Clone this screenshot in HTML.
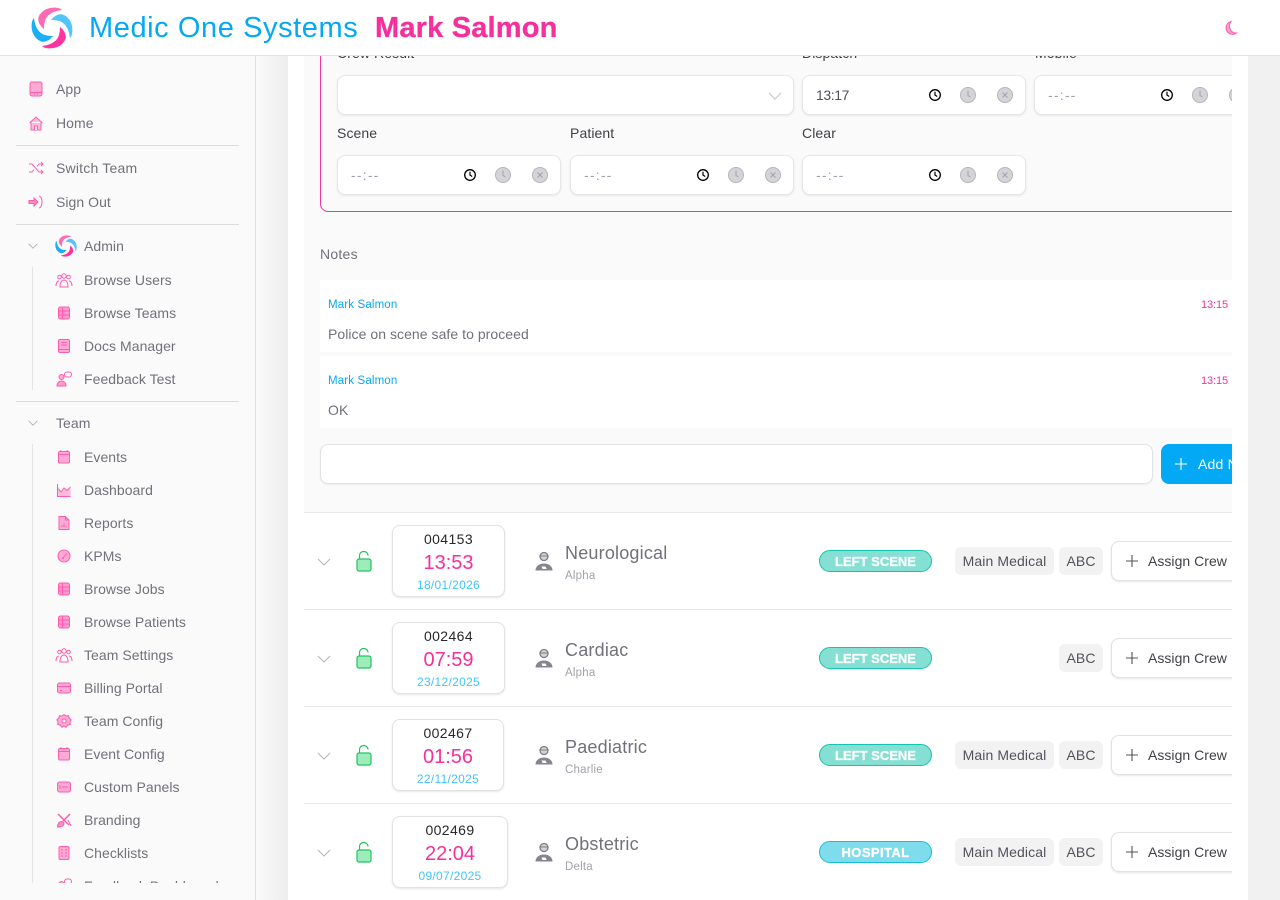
<!DOCTYPE html>
<html lang="en"><head><meta charset="utf-8"><title>Medic One Systems</title>
<style>
html,body{margin:0;padding:0;width:1280px;height:900px;overflow:hidden;background:#f1f1f1;font-family:"Liberation Sans",sans-serif}
.a{position:absolute}
.t{position:absolute;white-space:nowrap;line-height:20px;transform:translateY(-10px)}
#hdr{left:0;top:0;width:1280px;height:55px;background:#fff;border-bottom:1px solid #e2e2e2;z-index:5}
#side{left:0;top:56px;width:255px;height:844px;background:#fafafa;border-right:1px solid #e0e0e0}
#nav{left:0;top:0;width:255px;height:827px;overflow:hidden}
.n{font-size:14px;color:#71717a;letter-spacing:.05px}
.ni{position:absolute;width:18px;height:18px;color:#ff5cae}
.d{position:absolute;left:16px;width:223px;height:1px;background:#dcdcdc}
.v{position:absolute;left:32px;width:1px;background:#e4e4e4}
#grad{left:256px;top:56px;width:32px;height:844px;background:linear-gradient(90deg,#fafafa,#ededed)}
#card{left:288px;top:56px;width:960px;height:844px;background:#fff;overflow:hidden}
#clip{left:16px;top:0;width:928px;height:844px;overflow:hidden}
#panel{left:0;top:0;width:928px;height:456px;background:#fafafa}
#box{left:16px;top:-60px;width:1000px;height:214px;border:1px solid #f0349b;border-radius:8px}
.lb{font-size:14px;color:#3f3f46;letter-spacing:.1px}
.f{position:absolute;width:222px;height:38px;background:#fff;border:1px solid #e6e6e6;border-radius:8px;box-shadow:0 1px 2px rgba(0,0,0,.08)}
.f .tm{position:absolute;left:13px;top:9px;font-size:14px;line-height:20px;color:#9ca3af;letter-spacing:1.2px}
.f svg{position:absolute;top:10px}
.note{position:absolute;left:16px;width:912px;height:72px;background:#fff}
.nm{position:absolute;left:8px;top:16px;font-size:11.5px;line-height:18px;color:#03a9f4;letter-spacing:.15px}
.nt{position:absolute;right:4px;top:16px;font-size:11px;line-height:18px;color:#f72f9c;letter-spacing:-.1px}
.nb{position:absolute;left:8px;top:44px;font-size:14px;line-height:20px;color:#71717a;letter-spacing:.05px}
.row{position:absolute;left:0;width:928px;height:96px;background:#fff;border-top:1px solid #e8e8e8}
.bx{position:absolute;left:88px;top:12px;height:70px;background:#fff;border:1px solid #e2e2e2;border-radius:8px;box-shadow:0 1px 2px rgba(0,0,0,.1);text-align:center}
.no{position:absolute;left:0;right:0;top:3px;font-size:14px;line-height:20px;color:#27272a;letter-spacing:.4px}
.ti{position:absolute;left:0;right:0;top:24px;font-size:20px;line-height:26px;color:#f72f9c}
.da{position:absolute;left:0;right:0;top:51px;font-size:12px;line-height:16px;color:#40c4ff;letter-spacing:.3px}
.ttl{position:absolute;left:261px;top:29px;font-size:18px;line-height:22px;color:#71717a;letter-spacing:.2px}
.sub{position:absolute;left:261px;top:55px;font-size:11.5px;line-height:16px;color:#a1a1aa;letter-spacing:.2px}
.bd{position:absolute;left:515px;top:37px;width:111px;height:20px;border:1px solid #14c4ae;background:#85e0d3;border-radius:11px;color:#fff;font-size:13px;font-weight:bold;line-height:22px;text-align:center;-webkit-text-stroke:.3px #fff}
.tag{position:absolute;top:34px;height:28px;background:#f2f2f2;border-radius:6px;font-size:14px;line-height:28px;color:#52525b;text-align:center;letter-spacing:.1px}
.btn{position:absolute;left:807px;top:28px;width:140px;height:38px;background:#fff;border:1px solid #e2e2e2;border-radius:8px;box-shadow:0 1px 2px rgba(0,0,0,.1)}
.btn span{position:absolute;left:36px;top:9px;font-size:14px;line-height:20px;color:#3f3f46;white-space:nowrap;letter-spacing:.03px}
.ic{position:absolute}
</style></head><body>
<svg width="0" height="0" style="position:absolute">
<defs>
<path id="blade" d="M-2-20C4-21 8-20 10-18 2-17-5-14-7-7-8-3-8 0-8 1-13-3-15-8-13-12-11-16-7-19-2-20Z"/>
<symbol id="logo" viewBox="-21 -21 42 42">
<use href="#blade" fill="#ff6ab5"/>
<use href="#blade" fill="#54c4fa" transform="rotate(90)"/>
<use href="#blade" fill="#ff34a0" transform="rotate(180)"/>
<use href="#blade" fill="#19aef5" transform="rotate(270)"/>
</symbol>
<symbol id="chev" viewBox="0 0 16 16"><path d="M2 5l6 6 6-6" fill="none" stroke="currentColor" stroke-width="1"/></symbol>
<symbol id="app" viewBox="0 0 18 18"><rect x="3" y="2" width="12" height="14" rx="2" fill="currentColor" fill-opacity=".5" stroke="currentColor"/><path d="M3 12.500h12M7 14.300h1M10 14.300h1" stroke="currentColor"/></symbol>
<symbol id="home" viewBox="0 0 18 18"><path d="M2.500 9L9 3l6.500 6M4 8v8h10V8" fill="currentColor" fill-opacity=".4" stroke="currentColor"/><path d="M7.500 16v-4h3v4" fill="#fff" stroke="currentColor"/></symbol>
<symbol id="shuf" viewBox="0 0 18 18"><path d="M2 5h3l7 8h4M2 13h3l2-2.500M10 7.500L12 5h4M14 3l2 2-2 2M14 11l2 2-2 2" fill="none" stroke="currentColor"/></symbol>
<symbol id="out" viewBox="0 0 18 18"><path d="M2 7.500h5V5l4 4-4 4v-2.500H2z" fill="currentColor" fill-opacity=".7" stroke="currentColor"/><path d="M12 3c2 .5 3 2 3 6s-1 5.500-3 6" fill="none" stroke="currentColor"/></symbol>
<symbol id="users" viewBox="0 0 18 18"><circle cx="9" cy="5" r="2.200" fill="none" stroke="currentColor"/><circle cx="4.500" cy="6" r="1.800" fill="none" stroke="currentColor"/><circle cx="13.500" cy="6" r="1.800" fill="none" stroke="currentColor"/><path d="M1 15c0-4 2-5 3-5M17 15c0-4-2-5-3-5M5 16c0-5 2-7 4-7s4 2 4 7z" fill="none" stroke="currentColor"/></symbol>
<symbol id="tbl" viewBox="0 0 18 18"><rect x="3.500" y="3" width="11" height="12" rx="2" fill="currentColor" fill-opacity=".6" stroke="currentColor"/><path d="M3.500 7h11M3.500 11h11M7.500 3v12" stroke="currentColor"/></symbol>
<symbol id="doc" viewBox="0 0 18 18"><rect x="3.500" y="2.500" width="11" height="13" rx="1.500" fill="currentColor" fill-opacity=".5" stroke="currentColor"/><path d="M6 5.500h6M6 8h6M3.500 12.500h11" stroke="currentColor"/></symbol>
<symbol id="fb" viewBox="0 0 18 18"><circle cx="6.500" cy="7" r="2.500" fill="currentColor" fill-opacity=".5" stroke="currentColor"/><path d="M2 16c0-3 2-5 4.500-5S11 13 11 16z" fill="currentColor" fill-opacity=".6" stroke="currentColor"/><rect x="9.500" y="2" width="7" height="5" rx="2.500" fill="none" stroke="currentColor"/></symbol>
<symbol id="cal" viewBox="0 0 18 18"><rect x="3.500" y="3.500" width="11" height="11.500" rx="1.500" fill="currentColor" fill-opacity=".5" stroke="currentColor"/><path d="M3.500 6.500h11M6 2v2M12 2v2" stroke="currentColor"/></symbol>
<symbol id="chart" viewBox="0 0 18 18"><path d="M2.500 3v12.500h13V6l-3.500 3.500L9 7l-3 4-2-3z" fill="currentColor" fill-opacity=".4"/><path d="M2.500 3v12.500h13M3.500 8L6 11l3-4 3 2.500L15.500 6" fill="none" stroke="currentColor"/></symbol>
<symbol id="rep" viewBox="0 0 18 18"><path d="M4 2.500h6.500L14 6v9.500H4z" fill="currentColor" fill-opacity=".5" stroke="currentColor"/><path d="M10.500 2.500V6H14M7 13v-2M9 13v-3.500M11 13v-1" fill="none" stroke="currentColor"/></symbol>
<symbol id="kpm" viewBox="0 0 18 18"><circle cx="9" cy="9" r="6" fill="currentColor" fill-opacity=".5" stroke="currentColor"/><path d="M8 11l4-5" stroke="currentColor"/><circle cx="8" cy="11" r="1" fill="currentColor"/></symbol>
<symbol id="bill" viewBox="0 0 18 18"><rect x="2.500" y="4" width="13" height="10" rx="2" fill="currentColor" fill-opacity=".5" stroke="currentColor"/><path d="M2.500 7.500h13M5 11.500h2" stroke="currentColor"/></symbol>
<symbol id="cog" viewBox="0 0 18 18"><path d="M9 2.500l2 1.500 2.500-.3.800 2.300 1.800 1.700L15 10l.3 2.500-2.500.6L11 15.300 9 14l-2 1.300-1.800-2.200-2.500-.6L3 10 1.900 7.700l1.800-1.700.8-2.300L7 4z" fill="currentColor" fill-opacity=".5" stroke="currentColor"/><circle cx="9" cy="9" r="2" fill="#fff" stroke="currentColor"/></symbol>
<symbol id="pan" viewBox="0 0 18 18"><rect x="2.500" y="4" width="13" height="10" rx="2" fill="currentColor" fill-opacity=".5" stroke="currentColor"/><path d="M5 7v4M7 9h6" stroke="currentColor"/></symbol>
<symbol id="brush" viewBox="0 0 18 18"><path d="M3 3l11 11M15 3L8 10" fill="none" stroke="currentColor" stroke-width="1.500"/><path d="M2.500 16c0-3 1.500-5.500 4-5.500s3 2 2 3.500-3 2-6 2z" fill="currentColor" fill-opacity=".7" stroke="currentColor"/><path d="M13 9l3 6" stroke="currentColor"/></symbol>
<symbol id="chk" viewBox="0 0 18 18"><rect x="4" y="2.500" width="10" height="13" rx="1.500" fill="currentColor" fill-opacity=".5" stroke="currentColor"/><path d="M6 6h2M10 6h2M6 9h2M10 9h2M6 12h2M10 12h2" stroke="currentColor"/></symbol>
<symbol id="clk" viewBox="0 0 14 14"><circle cx="7" cy="7" r="5.300" fill="none" stroke="#000" stroke-width="1.300"/><path d="M7 3.800V7l2.200 1.500" fill="none" stroke="#000" stroke-width="1.200"/></symbol>
<symbol id="gclk" viewBox="0 0 18 18"><circle cx="9" cy="9" r="7.500" fill="#d4d4d8" stroke="#b4b4ba"/><path d="M9 4.500V9.500l2.500 1.500" fill="none" stroke="#a1a1aa"/></symbol>
<symbol id="gx" viewBox="0 0 18 18"><circle cx="9" cy="9" r="7.500" fill="#d4d4d8" stroke="#b4b4ba"/><path d="M6.500 6.500l5 5M11.500 6.500l-5 5" fill="none" stroke="#a1a1aa"/></symbol>
<symbol id="lock" viewBox="0 0 18 22"><rect x="2" y="9" width="14" height="12" rx="2" fill="#9eebbb" stroke="#22c55e" stroke-width="1.200"/><path d="M4.500 9V5.500C4.500 3 6.500 1.500 8.700 1.500S13 3 13 5.500" fill="none" stroke="#22c55e" stroke-width="1.200"/></symbol>
<symbol id="crew" viewBox="0 0 18 20"><circle cx="9" cy="5.500" r="4" fill="#d4d4d8" stroke="#7c7c84" stroke-width="1.300"/><path d="M5 5h8" stroke="#7c7c84"/><path d="M.5 19.500c0-4 3.500-7 8.500-7s8.500 3 8.500 7z" fill="#85858d"/><path d="M6.500 15.500h4l1.200 2.500H7.500z" fill="#fff"/></symbol>
<symbol id="plus" viewBox="0 0 12 12"><path d="M6 0v12M0 6h12" stroke="currentColor" stroke-width="1.100" fill="none"/></symbol>
<symbol id="moon" viewBox="0 0 16 16"><path d="M8 1.500A6.500 6.500 0 1 0 13.500 13 6.500 7 0 0 1 8 1.500Z" fill="#ff5cae" fill-opacity=".6" stroke="#ff5cae"/></symbol>
</defs></svg>

<div id="hdr" class="a">
<svg class="ic" style="left:31px;top:7px" width="42" height="42"><use href="#logo"/></svg>
<div class="t" style="left:89px;top:28px;font-size:29px;line-height:32px;transform:translateY(-16px);color:#03a9f4;letter-spacing:.58px">Medic One Systems</div>
<div class="t" style="left:375px;top:28px;font-size:29px;line-height:32px;transform:translateY(-16px);color:#f72f9c;font-weight:bold;letter-spacing:.19px;-webkit-text-stroke:.3px #f72f9c">Mark Salmon</div>
<svg class="ic" style="left:1223px;top:20px" width="16" height="16"><use href="#moon"/></svg>
</div>

<div id="side" class="a"><div id="nav" class="a">
<svg class="ni" style="left:27px;top:24px"><use href="#app"/></svg><div class="t n" style="left:56px;top:33px">App</div>
<svg class="ni" style="left:27px;top:58px"><use href="#home"/></svg><div class="t n" style="left:56px;top:67px">Home</div>
<div class="d" style="top:89px"></div>
<svg class="ni" style="left:27px;top:103px"><use href="#shuf"/></svg><div class="t n" style="left:56px;top:112px;letter-spacing:.2px">Switch Team</div>
<svg class="ni" style="left:27px;top:137px"><use href="#out"/></svg><div class="t n" style="left:56px;top:146px">Sign Out</div>
<div class="d" style="top:168px"></div>
<svg class="ic" style="left:27px;top:184px;color:#a1a1aa" width="12" height="12"><use href="#chev"/></svg>
<svg class="ic" style="left:55px;top:179px" width="22" height="22"><use href="#logo"/></svg>
<div class="t n" style="left:84px;top:190px">Admin</div>
<div class="v" style="top:211px;height:123px"></div>
<svg class="ni" style="left:55px;top:215px"><use href="#users"/></svg><div class="t n" style="left:84px;top:224px">Browse Users</div>
<svg class="ni" style="left:55px;top:248px"><use href="#tbl"/></svg><div class="t n" style="left:84px;top:257px">Browse Teams</div>
<svg class="ni" style="left:55px;top:281px"><use href="#doc"/></svg><div class="t n" style="left:84px;top:290px">Docs Manager</div>
<svg class="ni" style="left:55px;top:314px"><use href="#fb"/></svg><div class="t n" style="left:84px;top:323px">Feedback Test</div>
<div class="d" style="top:345px"></div>
<svg class="ic" style="left:27px;top:361px;color:#a1a1aa" width="12" height="12"><use href="#chev"/></svg>
<div class="t n" style="left:56px;top:367px">Team</div>
<div class="v" style="top:388px;height:439px"></div>
<svg class="ni" style="left:55px;top:392px"><use href="#cal"/></svg><div class="t n" style="left:84px;top:401px">Events</div>
<svg class="ni" style="left:55px;top:425px"><use href="#chart"/></svg><div class="t n" style="left:84px;top:434px">Dashboard</div>
<svg class="ni" style="left:55px;top:458px"><use href="#rep"/></svg><div class="t n" style="left:84px;top:467px">Reports</div>
<svg class="ni" style="left:55px;top:491px"><use href="#kpm"/></svg><div class="t n" style="left:84px;top:500px">KPMs</div>
<svg class="ni" style="left:55px;top:524px"><use href="#tbl"/></svg><div class="t n" style="left:84px;top:533px">Browse Jobs</div>
<svg class="ni" style="left:55px;top:557px"><use href="#tbl"/></svg><div class="t n" style="left:84px;top:566px">Browse Patients</div>
<svg class="ni" style="left:55px;top:590px"><use href="#users"/></svg><div class="t n" style="left:84px;top:599px">Team Settings</div>
<svg class="ni" style="left:55px;top:623px"><use href="#bill"/></svg><div class="t n" style="left:84px;top:632px">Billing Portal</div>
<svg class="ni" style="left:55px;top:656px"><use href="#cog"/></svg><div class="t n" style="left:84px;top:665px">Team Config</div>
<svg class="ni" style="left:55px;top:689px"><use href="#cal"/></svg><div class="t n" style="left:84px;top:698px">Event Config</div>
<svg class="ni" style="left:55px;top:722px"><use href="#pan"/></svg><div class="t n" style="left:84px;top:731px">Custom Panels</div>
<svg class="ni" style="left:55px;top:755px"><use href="#brush"/></svg><div class="t n" style="left:84px;top:764px">Branding</div>
<svg class="ni" style="left:55px;top:788px"><use href="#chk"/></svg><div class="t n" style="left:84px;top:797px">Checklists</div>
<svg class="ni" style="left:55px;top:821px"><use href="#fb"/></svg><div class="t n" style="left:84px;top:830px">Feedback Dashboard</div>
</div></div>

<div id="grad" class="a"></div>
<div id="card" class="a"><div id="clip" class="a">
<div id="panel" class="a"></div>
<div id="box" class="a"></div>

<div class="t lb" style="left:33px;top:-3px">Crew Result</div>
<div class="t lb" style="left:498px;top:-3px">Dispatch</div>
<div class="t lb" style="left:731px;top:-3px">Mobile</div>
<div class="f" style="left:33px;top:19px;width:455px"><svg style="left:429px;top:12px;color:#c4c4c8" width="16" height="16"><use href="#chev"/></svg></div>
<div class="f" style="left:498px;top:19px"><span class="tm" style="color:#52525b;letter-spacing:-.4px">13:17</span><svg style="left:125px;top:12px" width="14" height="14"><use href="#clk"/></svg><svg style="left:156px" width="18" height="18"><use href="#gclk"/></svg><svg style="left:193px" width="18" height="18"><use href="#gx"/></svg></div>
<div class="f" style="left:730px;top:19px"><span class="tm">--:--</span><svg style="left:125px;top:12px" width="14" height="14"><use href="#clk"/></svg><svg style="left:156px" width="18" height="18"><use href="#gclk"/></svg><svg style="left:193px" width="18" height="18"><use href="#gx"/></svg></div>

<div class="t lb" style="left:33px;top:77px">Scene</div>
<div class="t lb" style="left:266px;top:77px">Patient</div>
<div class="t lb" style="left:498px;top:77px">Clear</div>
<div class="f" style="left:33px;top:99px"><span class="tm">--:--</span><svg style="left:125px;top:12px" width="14" height="14"><use href="#clk"/></svg><svg style="left:156px" width="18" height="18"><use href="#gclk"/></svg><svg style="left:193px" width="18" height="18"><use href="#gx"/></svg></div>
<div class="f" style="left:266px;top:99px"><span class="tm">--:--</span><svg style="left:125px;top:12px" width="14" height="14"><use href="#clk"/></svg><svg style="left:156px" width="18" height="18"><use href="#gclk"/></svg><svg style="left:193px" width="18" height="18"><use href="#gx"/></svg></div>
<div class="f" style="left:498px;top:99px"><span class="tm">--:--</span><svg style="left:125px;top:12px" width="14" height="14"><use href="#clk"/></svg><svg style="left:156px" width="18" height="18"><use href="#gclk"/></svg><svg style="left:193px" width="18" height="18"><use href="#gx"/></svg></div>

<div class="t" style="left:16px;top:198px;font-size:14px;color:#71717a;letter-spacing:.25px">Notes</div>
<div class="note" style="top:224px"><span class="nm">Mark Salmon</span><span class="nt">13:15</span><span class="nb">Police on scene safe to proceed</span></div>
<div class="note" style="top:300px"><span class="nm">Mark Salmon</span><span class="nt">13:15</span><span class="nb">OK</span></div>
<div class="a" style="left:16px;top:388px;width:831px;height:38px;background:#fff;border:1px solid #e2e2e2;border-radius:8px;box-shadow:0 1px 2px rgba(0,0,0,.06)"></div>
<div class="a" style="left:857px;top:388px;width:120px;height:40px;background:#03a9f4;border-radius:8px;color:#fff">
<svg class="ic" style="left:14px;top:14px" width="12" height="12"><use href="#plus"/></svg>
<span class="a" style="left:37px;top:10px;font-size:14px;line-height:20px;white-space:nowrap;letter-spacing:.2px">Add Note</span></div>

<div class="row" style="top:456px">
<svg class="ic" style="left:12px;top:41px;color:#b4b4ba" width="16" height="16"><use href="#chev"/></svg>
<svg class="ic" style="left:51px;top:37px" width="18" height="22"><use href="#lock"/></svg>
<div class="bx" style="width:111px"><div class="no">004153</div><div class="ti">13:53</div><div class="da">18/01/2026</div></div>
<svg class="ic" style="left:231px;top:38px" width="18" height="20"><use href="#crew"/></svg>
<div class="ttl">Neurological</div><div class="sub">Alpha</div>
<div class="bd">LEFT SCENE</div>
<div class="tag" style="left:651px;width:99px">Main Medical</div><div class="tag" style="left:755px;width:44px">ABC</div>
<div class="btn"><svg class="ic" style="left:14px;top:13px;color:#52525b" width="12" height="12"><use href="#plus"/></svg><span>Assign Crew</span></div>
</div>

<div class="row" style="top:553px">
<svg class="ic" style="left:12px;top:41px;color:#b4b4ba" width="16" height="16"><use href="#chev"/></svg>
<svg class="ic" style="left:51px;top:37px" width="18" height="22"><use href="#lock"/></svg>
<div class="bx" style="width:111px"><div class="no">002464</div><div class="ti">07:59</div><div class="da">23/12/2025</div></div>
<svg class="ic" style="left:231px;top:38px" width="18" height="20"><use href="#crew"/></svg>
<div class="ttl">Cardiac</div><div class="sub">Alpha</div>
<div class="bd">LEFT SCENE</div>
<div class="tag" style="left:755px;width:44px">ABC</div>
<div class="btn"><svg class="ic" style="left:14px;top:13px;color:#52525b" width="12" height="12"><use href="#plus"/></svg><span>Assign Crew</span></div>
</div>

<div class="row" style="top:650px">
<svg class="ic" style="left:12px;top:41px;color:#b4b4ba" width="16" height="16"><use href="#chev"/></svg>
<svg class="ic" style="left:51px;top:37px" width="18" height="22"><use href="#lock"/></svg>
<div class="bx" style="width:110px"><div class="no">002467</div><div class="ti">01:56</div><div class="da">22/11/2025</div></div>
<svg class="ic" style="left:231px;top:38px" width="18" height="20"><use href="#crew"/></svg>
<div class="ttl">Paediatric</div><div class="sub">Charlie</div>
<div class="bd">LEFT SCENE</div>
<div class="tag" style="left:651px;width:99px">Main Medical</div><div class="tag" style="left:755px;width:44px">ABC</div>
<div class="btn"><svg class="ic" style="left:14px;top:13px;color:#52525b" width="12" height="12"><use href="#plus"/></svg><span>Assign Crew</span></div>
</div>

<div class="row" style="top:747px">
<svg class="ic" style="left:12px;top:41px;color:#b4b4ba" width="16" height="16"><use href="#chev"/></svg>
<svg class="ic" style="left:51px;top:37px" width="18" height="22"><use href="#lock"/></svg>
<div class="bx" style="width:114px"><div class="no">002469</div><div class="ti">22:04</div><div class="da">09/07/2025</div></div>
<svg class="ic" style="left:231px;top:38px" width="18" height="20"><use href="#crew"/></svg>
<div class="ttl">Obstetric</div><div class="sub">Delta</div>
<div class="bd" style="background:#7fdcec;border-color:#17bfd6;letter-spacing:.4px">HOSPITAL</div>
<div class="tag" style="left:651px;width:99px">Main Medical</div><div class="tag" style="left:755px;width:44px">ABC</div>
<div class="btn"><svg class="ic" style="left:14px;top:13px;color:#52525b" width="12" height="12"><use href="#plus"/></svg><span>Assign Crew</span></div>
</div>

</div></div>
</body></html>
